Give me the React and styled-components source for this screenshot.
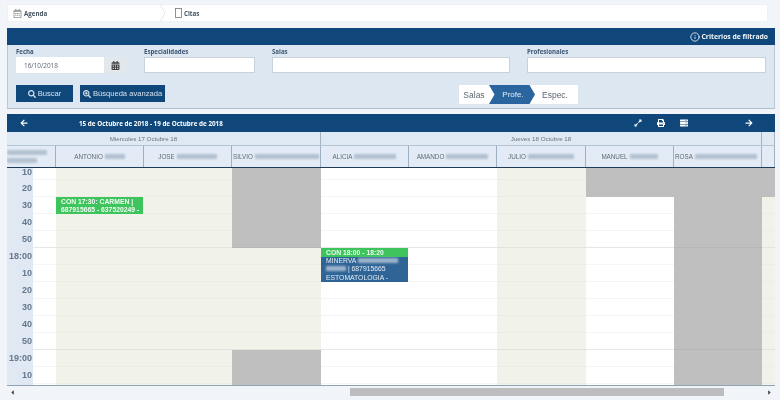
import styled, { createGlobalStyle } from "styled-components";
import {
  FaArrowLeft,
  FaArrowRight,
  FaCalendarAlt,
  FaExpandAlt,
  FaPrint,
  FaRegCalendarAlt,
  FaSearch,
  FaSearchPlus,
  FaServer,
  FaCaretLeft,
  FaCaretRight,
} from "react-icons/fa";
import { FiInfo } from "react-icons/fi";

const Global = createGlobalStyle`
  html, body {
    margin: 0;
    padding: 0;
    background: #f1f5fa;
    overflow: hidden;
  }
  * {
    box-sizing: border-box;
  }
`;

const COLS = "49px 88px 88px 89px 88px 88px 89px 88px 88px 13px";

const professionals = [
  { name: "ANTONIO", blur: 20, center: true },
  { name: "JOSE", blur: 40, center: true },
  { name: "SILVIO", blur: 64 },
  { name: "ALICIA", blur: 42, center: true },
  { name: "AMANDO", blur: 42, center: true },
  { name: "JULIO", blur: 46, center: true },
  { name: "MANUEL", blur: 28, center: true },
  { name: "ROSA", blur: 62 },
];

const times = ["10", "20", "30", "40", "50", "18:00", "10", "20", "30", "40", "50", "19:00", "10", ""];

// b = beige, g = gray, w = white, one letter per row
const columns = [
  "bbbbbbbbbbbbbb",
  "bbbbbbbbbbbbbb",
  "gggggbbbbbbggg",
  "wwwwwwwwwwwwww",
  "wwwwwwwwwwwwww",
  "bbbbbbbbbbbbbb",
  "ggwwwwwwwwwwww",
  "gggggggggggggg",
  "ggbbbbbbbbbbbb",
];

const cellColors = { b: "#f1f2e9", g: "#bfbfbf", w: "#ffffff" };
const cellLines = { b: "#ecede3", g: "#bfbfbf", w: "#f5f5f5" };
const hourLines = { b: "#e2e3da", g: "#b6b6b6", w: "#e6e7e7" };

// rows 4 and 10 close an hour
const isHourEnd = (r) => r === 4 || r === 10;

function App() {
  return (
    <Page>
      <Global />
      <Breadcrumb>
        <Crumb $width={152} $pad={5}>
          <FaRegCalendarAlt size={9} color="#8b8f93" />
          Agenda
        </Crumb>
        <CrumbArrow width="8" height="18" viewBox="0 0 8 18">
          <polyline points="0,0 5,9 0,18" fill="none" stroke="#e3e8ee" strokeWidth="1" />
        </CrumbArrow>
        <Crumb $width={60} $pad={7}>
          <svg width="7" height="10" viewBox="0 0 7 10">
            <rect x="0.5" y="0.5" width="6" height="9" fill="none" stroke="#777" strokeWidth="0.8" />
          </svg>
          Citas
        </Crumb>
      </Breadcrumb>

      <FilterPanel>
        <PanelTitle>
          <FiInfo size={10} />
          Criterios de filtrado
        </PanelTitle>
        <FilterBody>
          <FieldRow>
            <Field $width={111}>
              <Label>Fecha</Label>
              <DateGroup>
                <DateInput>16/10/2018</DateInput>
                <DateButton>
                  <FaCalendarAlt size={9} color="#3d3d3d" />
                </DateButton>
              </DateGroup>
            </Field>
            <Field $width={111}>
              <Label>Especialidades</Label>
              <TextInput />
            </Field>
            <Field $width={238}>
              <Label>Salas</Label>
              <TextInput />
            </Field>
            <Field $width={239}>
              <Label>Profesionales</Label>
              <TextInput />
            </Field>
          </FieldRow>
          <ActionRow>
            <Buttons>
              <ActionButton $width={57}>
                <FaSearch size={8} />
                Buscar
              </ActionButton>
              <ActionButton $width={85}>
                <FaSearchPlus size={8} />
                Búsqueda avanzada
              </ActionButton>
            </Buttons>
            <Segments>
              <Segment $width={30}>Salas</Segment>
              <ActiveSegment>Profe.</ActiveSegment>
              <Segment $width={46}>Espec.</Segment>
            </Segments>
          </ActionRow>
        </FilterBody>
      </FilterPanel>

      <Calendar>
        <CalendarBar>
          <BarLeft>
            <FaArrowLeft size={8} />
            <RangeTitle>15 de Octubre de 2018 - 19 de Octubre de 2018</RangeTitle>
          </BarLeft>
          <BarRight>
            <FaExpandAlt size={8} />
            <FaPrint size={8} />
            <FaServer size={8} />
            <NextArrow>
              <FaArrowRight size={8} />
            </NextArrow>
          </BarRight>
        </CalendarBar>

        <DayRow>
          <DayCell $left>Miercoles 17 Octubre 18</DayCell>
          <DayCell>Jueves 18 Octubre 18</DayCell>
          <DayCell />
        </DayRow>

        <HeadRow>
          <StackedHead>
            <BlurBar $width={40} />
            <BlurBar $width={30} />
          </StackedHead>
          {professionals.map((p) => (
            <HeadCell key={p.name} $center={p.center}>
              {p.name}
              <BlurBar $width={p.blur} />
            </HeadCell>
          ))}
          <HeadCell />
        </HeadRow>

        <Body>
          <BodyGrid>
            <TimeGroup>
              <TimeColumn>
                {times.map((t, i) => (
                  <TimeCell key={i} $first={i === 0}>
                    {t}
                  </TimeCell>
                ))}
              </TimeColumn>
              <Gutter>
                {times.map((t, i) => (
                  <Slot key={i} $kind="w" $first={i === 0} $hour={isHourEnd(i)} />
                ))}
              </Gutter>
            </TimeGroup>
            {columns.map((col, c) => (
              <div key={c}>
                {col.split("").map((kind, r) => (
                  <Slot key={r} $kind={kind} $first={r === 0} $hour={isHourEnd(r)}>
                    {c === 0 && r === 2 && (
                      <GreenEvent>
                        CON 17:30: CARMEN |<br />
                        687915665 - 637520249 -
                      </GreenEvent>
                    )}
                    {c === 3 && r === 5 && (
                      <EventStack>
                        <EventHead>CON 18:00 - 18:20</EventHead>
                        <EventBody>
                          MINERVA <BlurBar $width={40} $light />
                          <br />
                          <BlurBar $width={20} $light /> | 687915665
                          <br />
                          ESTOMATOLOGIA -
                        </EventBody>
                      </EventStack>
                    )}
                  </Slot>
                ))}
              </div>
            ))}
          </BodyGrid>
        </Body>

        <ScrollBar>
          <FaCaretLeft size={7} color="#444" />
          <ScrollTrack>
            <ScrollThumb />
          </ScrollTrack>
          <FaCaretRight size={7} color="#444" />
        </ScrollBar>
      </Calendar>
    </Page>
  );
}

export default App;

const Page = styled.div`
  width: 780px;
  height: 400px;
  padding: 4px 5px 0 7px;
  display: flex;
  flex-direction: column;
  background: #f1f5fa;
  font-family: "Liberation Sans", sans-serif;
  overflow: hidden;
  filter: blur(0.35px);
`;

const Breadcrumb = styled.div`
  width: 761px;
  height: 18px;
  display: flex;
  align-items: center;
  background: #ffffff;
  border: 1px solid #edf1f5;
  flex-shrink: 0;
`;

const Crumb = styled.div`
  width: ${(p) => p.$width}px;
  padding-left: ${(p) => p.$pad}px;
  display: flex;
  align-items: center;
  gap: 2px;
  font-family: "Open Sans", sans-serif;
  font-size: 6.2px;
  font-weight: 700;
  color: #44525f;
`;

const CrumbArrow = styled.svg`
  flex-shrink: 0;
`;

const FilterPanel = styled.section`
  width: 768px;
  margin-top: 6px;
  flex-shrink: 0;
  border-bottom: 1px solid #aebfce;
`;

const PanelTitle = styled.div`
  height: 17px;
  padding-right: 7px;
  display: flex;
  align-items: center;
  justify-content: flex-end;
  gap: 2px;
  background: #0f477a;
  color: #f3f7fa;
  font-family: "Open Sans", sans-serif;
  font-size: 6.8px;
  font-weight: 700;
`;

const FilterBody = styled.div`
  height: 63px;
  padding: 2px 8px 0 8px;
  background: #dce7f2;
  border-left: 1px solid #b9c9d8;
  border-right: 1px solid #b9c9d8;
`;

const FieldRow = styled.div`
  display: flex;
  gap: 17px;
`;

const Field = styled.div`
  width: ${(p) => p.$width}px;
  display: flex;
  flex-direction: column;
`;

const Label = styled.label`
  height: 10px;
  line-height: 9px;
  font-family: "Open Sans", sans-serif;
  font-size: 6.1px;
  font-weight: 700;
  color: #3c5570;
`;

const DateGroup = styled.div`
  display: flex;
  height: 16px;
`;

const DateInput = styled.div`
  width: 88px;
  padding-left: 8px;
  display: flex;
  align-items: center;
  background: #ffffff;
  font-family: "Open Sans", sans-serif;
  font-size: 6.4px;
  color: #5b6670;
`;

const DateButton = styled.div`
  width: 23px;
  display: flex;
  align-items: center;
  justify-content: center;
  background: #e3e8ed;
`;

const TextInput = styled.div`
  height: 16px;
  background: #ffffff;
  border: 1px solid #c9d2da;
`;

const ActionRow = styled.div`
  margin-top: 12px;
  display: flex;
  align-items: flex-start;
`;

const Buttons = styled.div`
  width: 443px;
  display: flex;
  gap: 7px;
`;

const ActionButton = styled.button`
  width: ${(p) => p.$width}px;
  height: 17px;
  padding: 0;
  display: flex;
  align-items: center;
  justify-content: center;
  gap: 2px;
  border: none;
  background: #0f477a;
  color: #d5e1ec;
  font-family: "Liberation Sans", sans-serif;
  font-size: 7.6px;
  white-space: nowrap;

  svg {
    flex-shrink: 0;
  }
`;

const Segments = styled.div`
  display: flex;
  height: 19px;
  background: #ffffff;
  font-size: 8.5px;
  color: #5f6770;
`;

const Segment = styled.div`
  width: ${(p) => p.$width}px;
  display: flex;
  align-items: center;
  justify-content: center;
`;

const ActiveSegment = styled.div`
  width: 46px;
  margin-right: -3px;
  position: relative;
  z-index: 1;
  padding-left: 2px;
  display: flex;
  align-items: center;
  justify-content: center;
  background: #2a659f;
  color: #e4edf5;
  font-size: 8px;
  clip-path: polygon(0 0, 88% 0, 100% 50%, 88% 100%, 0 100%, 12% 50%);
`;

const Calendar = styled.section`
  width: 768px;
  margin-top: 5px;
  display: flex;
  flex-direction: column;
  flex-shrink: 0;
`;

const CalendarBar = styled.div`
  height: 18px;
  display: flex;
  align-items: center;
  justify-content: space-between;
  padding: 0 22px 0 13px;
  background: #0f477a;
  color: #ffffff;
`;

const BarLeft = styled.div`
  display: flex;
  align-items: center;
  gap: 51px;
`;

const RangeTitle = styled.span`
  font-family: "Open Sans", sans-serif;
  font-size: 6.3px;
  font-weight: 700;
`;

const BarRight = styled.div`
  display: flex;
  align-items: center;
  gap: 15px;
`;

const NextArrow = styled.span`
  display: flex;
  margin-left: 42px;
`;

const DayRow = styled.div`
  display: grid;
  grid-template-columns: 314px 441px 13px;
  height: 13px;
  background: #dfe9f4;
`;

const DayCell = styled.div`
  padding-right: ${(p) => (p.$left ? 40 : 0)}px;
  display: flex;
  align-items: center;
  justify-content: center;
  border-right: 1px solid #a3b3c2;
  font-size: 6.2px;
  color: #69727c;
`;

const HeadRow = styled.div`
  display: grid;
  grid-template-columns: ${COLS};
  height: 23px;
  background: #e3ecf6;
  border-top: 1px solid #b6c5d4;
  border-bottom: 1px solid #1e3a55;
`;

const HeadCell = styled.div`
  padding-left: ${(p) => (p.$center ? 0 : 1)}px;
  display: flex;
  align-items: center;
  justify-content: ${(p) => (p.$center ? "center" : "flex-start")};
  gap: 2px;
  border-right: 1px solid #9fb0c2;
  font-size: 6.3px;
  color: #5f6973;
  overflow: hidden;
  white-space: nowrap;
`;

const StackedHead = styled.div`
  display: flex;
  flex-direction: column;
  justify-content: center;
  gap: 3px;
  border-right: 1px solid #9fb0c2;
  overflow: hidden;
`;

const BlurBar = styled.span`
  display: inline-block;
  width: ${(p) => p.$width}px;
  height: 5px;
  background: ${(p) => (p.$light ? "#9db4cc" : "#b2c0d0")};
  filter: blur(1.2px);
`;

const Body = styled.div`
  height: 218px;
  overflow: hidden;
  border-bottom: 1px solid #8fa3b5;
`;

const BodyGrid = styled.div`
  display: grid;
  grid-template-columns: ${COLS};
`;

const TimeGroup = styled.div`
  display: grid;
  grid-template-columns: 26px 23px;
`;

const TimeColumn = styled.div`
  background: #dfe8f3;
`;

const Gutter = styled.div`
  background: #ffffff;
`;

const TimeCell = styled.div`
  height: ${(p) => (p.$first ? 12 : 17)}px;
  padding: 0 1px ${(p) => (p.$first ? 3 : 0)}px 0;
  display: flex;
  align-items: ${(p) => (p.$first ? "flex-end" : "center")};
  justify-content: flex-end;
  font-size: 9px;
  line-height: 9px;
  font-weight: 700;
  color: #66788c;
`;

const Slot = styled.div`
  position: relative;
  height: ${(p) => (p.$first ? 12 : 17)}px;
  background: ${(p) => cellColors[p.$kind]};
  border-bottom: 1px solid ${(p) => (p.$hour ? hourLines[p.$kind] : cellLines[p.$kind])};
`;

const GreenEvent = styled.div`
  position: absolute;
  z-index: 2;
  top: 0;
  left: 0;
  width: 87px;
  height: 17px;
  padding: 1px 0 0 5px;
  background: #3dc45c;
  color: #f2fbf3;
  font-size: 6.8px;
  font-weight: 700;
  line-height: 8px;
  white-space: nowrap;
  overflow: hidden;
`;

const EventStack = styled.div`
  position: absolute;
  z-index: 2;
  top: 0;
  left: 0;
  width: 87px;
`;

const EventHead = styled.div`
  height: 9px;
  padding-left: 5px;
  background: #3dc45c;
  color: #eefaf0;
  font-size: 6.8px;
  font-weight: 700;
  line-height: 9px;
`;

const EventBody = styled.div`
  height: 25px;
  padding-left: 5px;
  background: #2f6496;
  color: #e4edf5;
  font-size: 6.8px;
  line-height: 8.3px;
  white-space: nowrap;
`;

const ScrollBar = styled.div`
  height: 12px;
  padding: 0 2px;
  display: flex;
  align-items: center;
  justify-content: space-between;
`;

const ScrollTrack = styled.div`
  flex: 1;
  height: 8px;
  margin: 0 1px;
`;

const ScrollThumb = styled.div`
  width: 374px;
  height: 8px;
  margin-left: 333px;
  background: #bdbdbf;
`;
